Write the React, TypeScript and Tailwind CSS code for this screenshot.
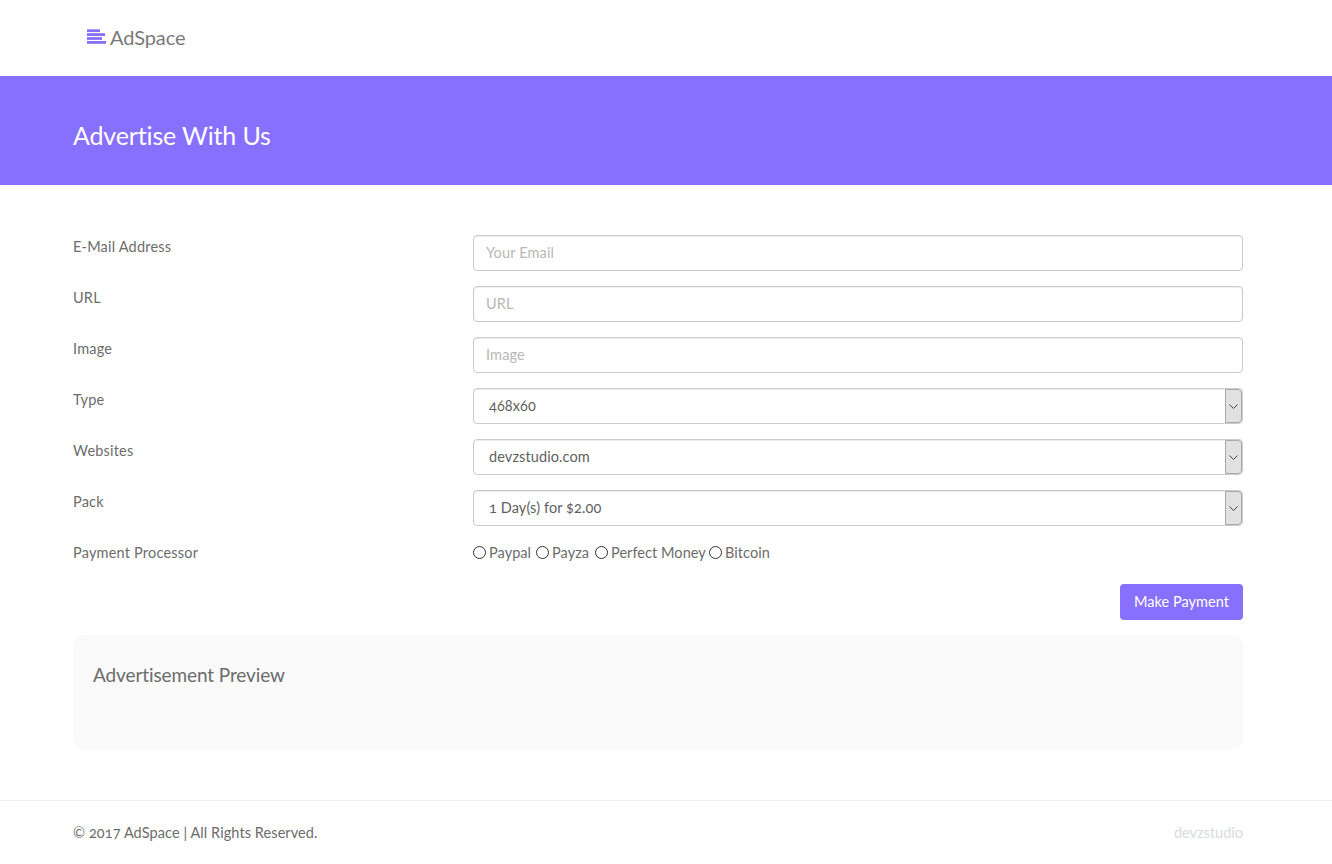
const font = "font-['Lato','Open_Sans',sans-serif]";

function MenuMark() {
  return (
    <svg width="19" height="15" viewBox="0 0 19 15" className="shrink-0" fill="#8870ff">
      <rect x="0" y="0.3" width="13" height="2.8" />
      <rect x="0" y="4.2" width="18" height="2.8" />
      <rect x="0" y="8.1" width="15" height="2.8" />
      <rect x="0" y="12" width="19" height="2.8" />
    </svg>
  );
}

function Row({ label, children }: { label: string; children: React.ReactNode }) {
  return (
    <div className="mb-[15px] flex">
      <label className="w-[400px] shrink-0 pt-[2px] text-[14.5px] leading-[20px] tracking-[0.2px] text-[#6c6c6c]">{label}</label>
      <div className="flex-1">{children}</div>
    </div>
  );
}

function TextInput({ placeholder }: { placeholder: string }) {
  return (
    <input
      placeholder={placeholder}
      className="block h-9 w-full rounded border border-[#ccc] bg-white px-3 pb-[2px] text-[14.5px] tracking-[0.15px] text-[#666] shadow-[inset_0_1px_1px_rgba(0,0,0,0.075)] placeholder:text-[#b8b8b8]"
    />
  );
}

function SelectBox({ value }: { value: string }) {
  return (
    <div className="relative h-9 w-full">
      <select className="block h-9 w-full appearance-none rounded border border-[#ccc] bg-white px-[15px] text-[14.5px] tracking-[0.1px] text-[#5f5f5f] oldstyle-nums shadow-[inset_0_1px_1px_rgba(0,0,0,0.075)]">
        <option>{value}</option>
      </select>
      <span className="pointer-events-none absolute right-px top-px flex h-[34px] w-[17px] items-center justify-center rounded-r border border-[#a9a9a9] bg-[#e1e1e1]">
        <svg width="9" height="5" viewBox="0 0 9 5" fill="none" stroke="#444" strokeWidth="1">
          <path d="M0.5 0.5 L4.5 4.5 L8.5 0.5" />
        </svg>
      </span>
    </div>
  );
}

function Radio({ label, width }: { label: string; width: string }) {
  return (
    <label className={`flex items-center gap-[3px] ${width}`}>
      <span className="mb-[2px] h-[13px] w-[13px] shrink-0 rounded-full border border-[#333] bg-white" />
      <span className="whitespace-nowrap">{label}</span>
    </label>
  );
}

export default function App() {
  return (
    <div className={`${font} min-h-[864px] bg-white text-[#6c6c6c]`}>
      <nav className="flex h-[76px] items-center gap-[4px] pb-[3px] pl-[87px]">
        <MenuMark />
        <span className="text-[20px] tracking-[-0.1px] text-[#7a7a7a]">AdSpace</span>
      </nav>

      <header className="flex h-[109px] items-center bg-[#8870ff] pl-[73px] pt-[10px]">
        <h1 className="text-[25px] font-normal tracking-[-0.15px] text-white">Advertise With Us</h1>
      </header>

      <main className="ml-[73px] w-[1170px] pt-[50px]">
        <Row label="E-Mail Address"><TextInput placeholder="Your Email" /></Row>
        <Row label="URL"><TextInput placeholder="URL" /></Row>
        <Row label="Image"><TextInput placeholder="Image" /></Row>
        <Row label="Type"><SelectBox value="468x60" /></Row>
        <Row label="Websites"><SelectBox value="devzstudio.com" /></Row>
        <Row label="Pack"><SelectBox value="1 Day(s) for $2.00" /></Row>

        <div className="flex h-[24px] items-center text-[14.5px]">
          <span className="w-[400px] shrink-0 tracking-[0.2px]">Payment Processor</span>
          <div className="flex tracking-[0.06px]">
            <Radio label="Paypal" width="w-[63px]" />
            <Radio label="Payza" width="w-[59px]" />
            <Radio label="Perfect Money" width="w-[114px]" />
            <Radio label="Bitcoin" width="w-[62px]" />
          </div>
        </div>

        <div className="mt-[19px] flex justify-end">
          <button className="h-9 w-[123px] rounded bg-[#8870ff] text-[14.5px] tracking-[0.05px] text-white">Make Payment</button>
        </div>

        <section className="mt-[15px] h-[115px] rounded-xl bg-[#fafafa] px-5 pt-[26px]">
          <h2 className="text-[19px] font-normal leading-[28px] tracking-[-0.1px] text-[#6c6c6c]">Advertisement Preview</h2>
        </section>
      </main>

      <footer className="mt-[50px] h-[64px] border-t border-[#eee]">
        <div className="ml-[73px] flex h-[64px] w-[1170px] items-center justify-between text-[14.5px]">
          <span className="oldstyle-nums tracking-[0.08px]">© 2017 AdSpace | All Rights Reserved.</span>
          <span className="text-[#d8dcdc]">devzstudio</span>
        </div>
      </footer>
    </div>
  );
}
